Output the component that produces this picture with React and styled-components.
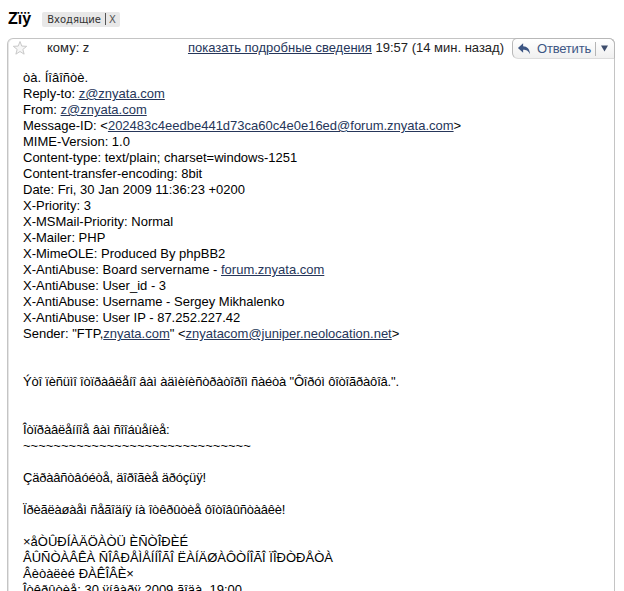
import React from "react";
import styled, { createGlobalStyle } from "styled-components";

const GlobalStyle = createGlobalStyle`
  html, body {
    margin: 0;
    padding: 0;
    background: #fff;
    overflow: hidden;
  }
  body {
    font-family: "Liberation Sans", Arial, sans-serif;
    font-size: 13px;
    color: #000;
  }
`;

const Page = styled.div`
  padding: 8px 9px 0 7px;
`;

const TitleRow = styled.div`
  display: flex;
  align-items: center;
  gap: 11px;
  height: 22px;
  padding-left: 1px;
`;

const Subject = styled.h1`
  margin: 0;
  font-family: "Liberation Sans", Arial, sans-serif;
  font-size: 16px;
  font-weight: bold;
  color: #000;
`;

const Label = styled.span`
  display: inline-flex;
  align-items: center;
  height: 15px;
  padding: 0 4px 0 5px;
  background: #e8e8e8;
  border-radius: 2px;
  font-family: "DejaVu Sans", Verdana, sans-serif;
  font-size: 10px;
  color: #333;
`;

const LabelSep = styled.span`
  width: 1px;
  height: 12px;
  margin: 0 3px 0 4px;
  background: #555;
`;

const LabelClose = styled.span`
  color: #555;
`;

const Card = styled.div`
  margin-top: 8px;
  border: 1px solid #c4c4c4;
  border-bottom: none;
  border-radius: 6px 6px 0 0;
  box-shadow: inset 1px 0 0 #e6e6e6;
`;

const Header = styled.div`
  display: flex;
  align-items: flex-start;
  height: 20px;
`;

const Star = styled.svg`
  margin: 1px 0 0 4px;
  flex: none;
`;

const To = styled.span`
  margin-left: 19px;
  line-height: 18px;
  color: #222;
`;

const Meta = styled.span`
  margin-left: auto;
  margin-right: 8px;
  line-height: 18px;
  color: #222;
`;

const Link = styled.a`
  color: #26365a;
  text-decoration: underline;
  cursor: pointer;
`;

const ReplyButton = styled.div`
  display: flex;
  align-items: center;
  height: 19px;
  margin: -1px -1px 0 0;
  padding: 0 6px 0 4px;
  border: 1px solid #b8b8b8;
  border-bottom-color: #dcdcdc;
  border-radius: 5px 6px 0 6px;
  background: linear-gradient(#ffffff, #f0f0f0);
  color: #3d5684;
`;

const ReplyText = styled.span`
  margin-left: 6px;
  line-height: 18px;
  letter-spacing: -0.2px;
`;

const BtnSep = styled.span`
  width: 1px;
  height: 14px;
  margin: 0 5px 0 4px;
  background: #b5b5b5;
`;

const Body = styled.div`
  padding: 11px 15px 0 15px;
`;

const Line = styled.div`
  height: 16px;
  line-height: 16px;
  white-space: pre;
  letter-spacing: ${(p) => (p.$tight ? "-0.2px" : "normal")};
`;

const L = (t) => <Link>{t}</Link>;

const lines = [
  ["òà. Íîâîñòè."],
  ["Reply-to: ", L("z@znyata.com")],
  ["From: ", L("z@znyata.com")],
  ["Message-ID: <", L("202483c4eedbe441d73ca60c4e0e16ed@forum.znyata.com"), ">"],
  ["MIME-Version: 1.0"],
  ["Content-type: text/plain; charset=windows-1251"],
  ["Content-transfer-encoding: 8bit"],
  ["Date: Fri, 30 Jan 2009 11:36:23 +0200"],
  ["X-Priority: 3"],
  ["X-MSMail-Priority: Normal"],
  ["X-Mailer: PHP"],
  ["X-MimeOLE: Produced By phpBB2"],
  ["X-AntiAbuse: Board servername - ", L("forum.znyata.com")],
  ["X-AntiAbuse: User_id - 3"],
  ["X-AntiAbuse: Username - Sergey Mikhalenko"],
  ["X-AntiAbuse: User IP - 87.252.227.42"],
  ['Sender: "FTP,', L("znyata.com"), '" <', L("znyatacom@juniper.neolocation.net"), ">"],
  [],
  [],
  ['Ýòî ïèñüìî îòïðàâëåíî âàì àäìèíèñòðàòîðîì ñàéòà "Ôîðóì ôîòîãðàôîâ.".'],
  [],
  [],
  ["Îòïðàâëåííîå âàì ñîîáùåíèå:"],
  ["~".repeat(30)],
  [],
  ["Çäðàâñòâóéòå, äîðîãèå äðóçüÿ!"],
  [],
  ["Ïðèãëàøàåì ñåãîäíÿ íà îòêðûòèå ôîòîâûñòàâêè!"],
  [],
  ["×åÒÛÐÍÀÄÖÀÒÜ ÈÑÒÎÐÈÉ"],
  ["ÂÛÑÒÀÂÊÀ ÑÎÂÐÅÌÅÍÍÎÃÎ ËÀÍÄØÀÔÒÍÎÃÎ ÏÎÐÒÐÅÒÀ"],
  ["Âèòàëèé ÐÀÊÎÂÈ×"],
  ["Îòêðûòèå: 30 ÿíâàðÿ 2009 ãîäà, 19:00"],
];

// lowercase mojibake lines render a bit narrower in the original
const tightLines = new Set([19, 22, 25, 27]);

const App = () => {
  return (
    <Page>
      <GlobalStyle />
      <TitleRow>
        <Subject>Zïÿ</Subject>
        <Label>
          Входящие
          <LabelSep />
          <LabelClose>X</LabelClose>
        </Label>
      </TitleRow>
      <Card>
        <Header>
          <Star width="16" height="16" viewBox="0 0 16 16">
            <polygon
              points="8,1.5 9.76,6.07 14.66,6.34 10.85,9.43 12.11,14.16 8,11.5 3.89,14.16 5.15,9.43 1.34,6.34 6.24,6.07"
              fill="#f6f6f6"
              stroke="#c9c9c9"
              strokeWidth="1"
              strokeLinejoin="round"
            />
          </Star>
          <To>кому: z</To>
          <Meta>
            <Link>показать подробные сведения</Link> 19:57 (14 мин. назад)
          </Meta>
          <ReplyButton>
            <svg width="14" height="13" viewBox="0 0 16 15">
              <path
                d="M7 1.5 L1 7 L7 12.5 V9 C10.5 9 13 10 15 14 C14.6 8.2 11.5 5 7 5 Z"
                fill="#3d5684"
              />
            </svg>
            <ReplyText>Ответить</ReplyText>
            <BtnSep />
            <svg width="7" height="7" viewBox="0 0 8 7">
              <path d="M0 0 H8 L4 7 Z" fill="#3d4d6c" />
            </svg>
          </ReplyButton>
        </Header>
        <Body>
          {lines.map((parts, i) => (
            <Line key={i} $tight={tightLines.has(i)}>
              {parts.map((p, j) => (
                <React.Fragment key={j}>{p}</React.Fragment>
              ))}
            </Line>
          ))}
        </Body>
      </Card>
    </Page>
  );
};

export default App;
